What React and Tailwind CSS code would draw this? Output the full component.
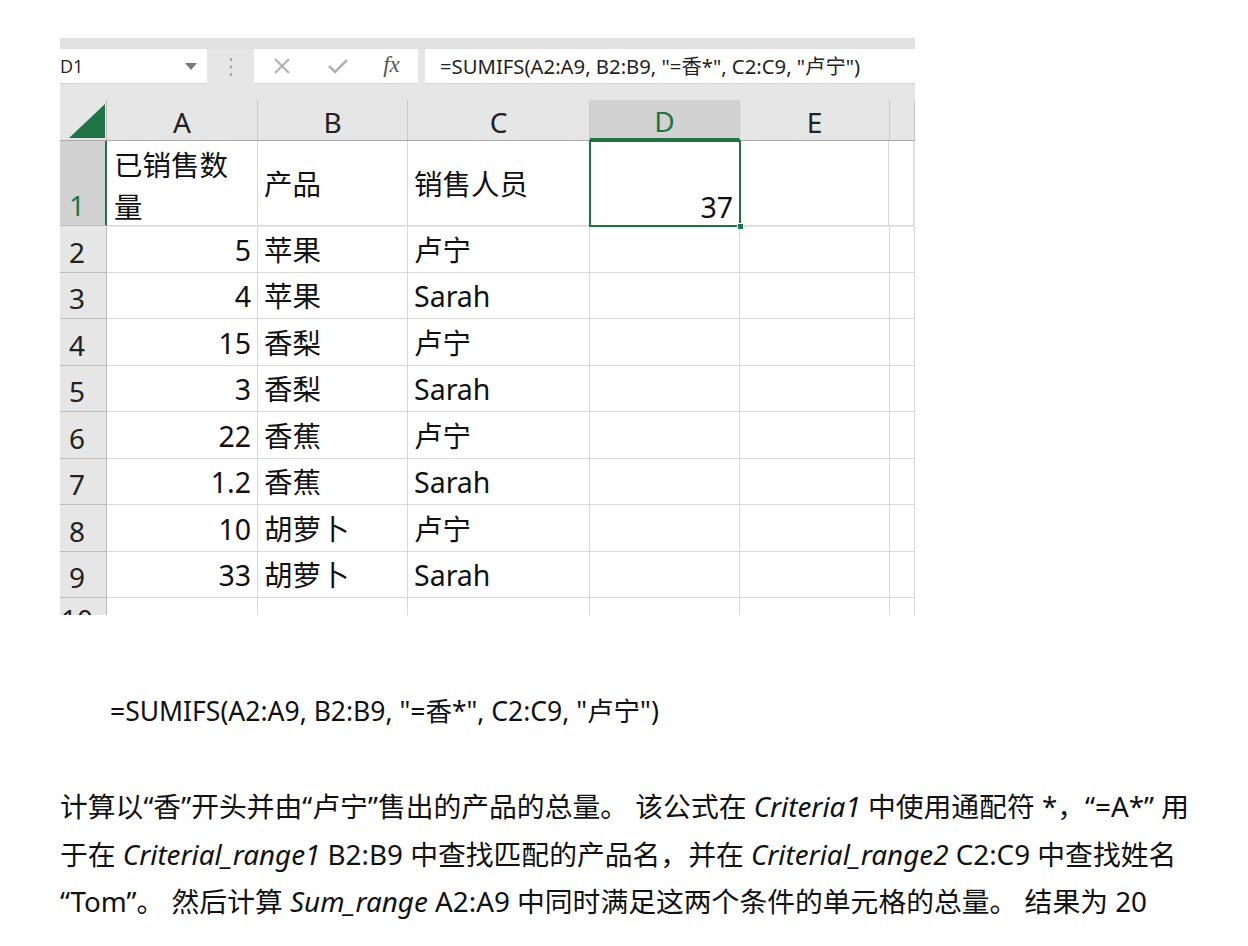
import React from "react";

const GREEN = "#217346";
const colW = [151, 150, 182, 150, 150, 25];
const rowsData = [
  ["5", "苹果", "卢宁"],
  ["4", "苹果", "Sarah"],
  ["15", "香梨", "卢宁"],
  ["3", "香梨", "Sarah"],
  ["22", "香蕉", "卢宁"],
  ["1.2", "香蕉", "Sarah"],
  ["10", "胡萝卜", "卢宁"],
  ["33", "胡萝卜", "Sarah"],
];
const rowH = [46, 46, 47, 46, 47, 46, 47, 46];
const colLetters = ["A", "B", "C", "D", "E", ""];

const font = { fontFamily: '"Noto Sans", "Noto Sans CJK SC", sans-serif' };

function RowHeader({ n, h, selected }) {
  return (
    <div
      className={`w-[47px] shrink-0 flex items-end border-b border-r ${
        selected ? "bg-[#d2d2d2] border-r-[#217346] border-r-2 border-b-[#bdbdbd]" : "bg-[#e6e6e6] border-[#bdbdbd]"
      }`}
      style={{ height: h }}
    >
      <div
        className={`w-[34px] text-center text-[28px] leading-[34px] pb-[3px] ${selected ? "text-[#217346]" : "text-[#222]"}`}
      >
        {n}
      </div>
    </div>
  );
}

function Cell({ w, h, children, align = "left", className = "" }) {
  return (
    <div
      className={`shrink-0 flex items-end border-b border-r border-[#d9d9d9] bg-white px-[6px] pb-[4px] text-[28.5px] leading-[36px] text-[#111] ${
        align === "right" ? "justify-end" : "justify-start"
      } ${className}`}
      style={{ width: w, height: h }}
    >
      {children}
    </div>
  );
}

function Excel() {
  return (
    <div className="w-[855px] h-[577px] overflow-hidden bg-[#e6e6e6] relative" style={font}>
      {/* top band */}
      <div className="h-[11px] bg-[#e1e1e1]" />
      {/* formula bar */}
      <div className="h-[35px] flex items-stretch">
        <div className="w-[147px] bg-white border-b border-[#d4d4d4] flex items-center justify-between pr-[10px]">
          <span className="text-[18px] text-[#222] leading-none" style={{ fontFamily: '"Open Sans", sans-serif' }}>D1</span>
          <svg width="12" height="7" viewBox="0 0 12 7">
            <path d="M0 0 L12 0 L6 7 Z" fill="#7a7a7a" />
          </svg>
        </div>
        <div className="w-[47px] flex items-center justify-center">
          <svg width="4" height="20" viewBox="0 0 4 20">
            <rect x="1" y="1" width="2" height="3" fill="#a8a8a8" />
            <rect x="1" y="8.5" width="2" height="3" fill="#a8a8a8" />
            <rect x="1" y="16" width="2" height="3" fill="#a8a8a8" />
          </svg>
        </div>
        <div className="w-[164px] bg-white border-b border-[#d4d4d4] flex items-center">
          <div className="w-[56px] flex justify-center">
            <svg width="18" height="18" viewBox="0 0 18 18">
              <path d="M2 2 L16 16 M16 2 L2 16" stroke="#b3b3b3" strokeWidth="2.2" />
            </svg>
          </div>
          <div className="w-[55px] flex justify-center">
            <svg width="22" height="18" viewBox="0 0 22 18">
              <path d="M2 9 L8 15 L20 3" stroke="#b3b3b3" strokeWidth="2.6" fill="none" />
            </svg>
          </div>
          <div className="w-[53px] flex justify-center">
            <span
              className="text-[23px] italic text-[#555] leading-none -mt-[3px]"
              style={{ fontFamily: '"Liberation Serif", serif' }}
            >
              fx
            </span>
          </div>
        </div>
        <div className="w-[7px]" />
        <div className="flex-1 bg-white border-b border-[#d4d4d4] flex items-center pl-[15px]">
          <span className="text-[20.3px] text-[#222] leading-none whitespace-nowrap" style={font}>
            =SUMIFS(A2:A9, B2:B9, "=香*", C2:C9, "卢宁")
          </span>
        </div>
      </div>
      <div className="h-[16px]" />
      {/* column headers */}
      <div className="flex h-[41px] border-b border-[#ababab]">
        <div className="w-[47px] shrink-0 border-r border-[#bdbdbd] bg-[#e6e6e6] relative">
          <svg className="absolute left-[8px] top-[3px]" width="38" height="36" viewBox="0 0 38 36">
            <path d="M37 1 L37 35 L1 35 Z" fill={GREEN} />
          </svg>
        </div>
        {colLetters.map((l, i) => (
          <div
            key={i}
            className={`shrink-0 flex items-center justify-center text-[28px] border-r border-[#c8c8c8] ${
              l === "D" ? "bg-[#d2d2d2] text-[#217346] border-b-2 border-b-[#217346]" : "text-[#222]"
            }`}
            style={{ width: colW[i] }}
          >
            <span className="mt-[4px]">{l}</span>
          </div>
        ))}
      </div>
      {/* row 1 */}
      <div className="flex">
        <RowHeader n="1" h={85} selected />
        <div
          className="shrink-0 border-b border-r border-[#d9d9d9] bg-white px-[7px] pt-[3px] text-[28.5px] leading-[42px] text-[#111]"
          style={{ width: colW[0], height: 85 }}
        >
          已销售数量
        </div>
        <div
          className="shrink-0 flex items-center border-b border-r border-[#d9d9d9] bg-white px-[6px] pt-[2px] text-[28.5px] text-[#111]"
          style={{ width: colW[1], height: 85 }}
        >
          产品
        </div>
        <div
          className="shrink-0 flex items-center border-b border-r border-[#d9d9d9] bg-white px-[6px] pt-[2px] text-[28.5px] text-[#111]"
          style={{ width: colW[2], height: 85 }}
        >
          销售人员
        </div>
        <div
          className="shrink-0 relative flex items-end justify-end bg-white px-[6px] text-[28.5px] leading-[36px] text-[#111] border-2 border-[#217346] -ml-[1px] -mt-[1px] -mr-[1px]"
          style={{ width: colW[3] + 2, height: 87 }}
        >
          37
          <div className="absolute -right-[5px] -bottom-[5px] w-[7px] h-[7px] bg-[#217346] border border-white" />
        </div>
        <Cell w={colW[4] - 1} h={85} />
        <Cell w={colW[5]} h={85} />
      </div>
      {rowsData.map((r, idx) => (
        <div className="flex" key={idx}>
          <RowHeader n={String(idx + 2)} h={rowH[idx]} />
          <Cell w={colW[0]} h={rowH[idx]} align="right">{r[0]}</Cell>
          <Cell w={colW[1]} h={rowH[idx]}>{r[1]}</Cell>
          <Cell w={colW[2]} h={rowH[idx]}>{r[2]}</Cell>
          <Cell w={colW[3]} h={rowH[idx]} />
          <Cell w={colW[4]} h={rowH[idx]} />
          <Cell w={colW[5]} h={rowH[idx]} />
        </div>
      ))}
      <div className="flex">
        <div className="w-[47px] shrink-0 h-[46px] bg-[#e6e6e6] border-r border-[#bdbdbd] flex items-start">
          <div className="w-[34px] text-center text-[28px] leading-[34px] pt-[4px] text-[#222]">10</div>
        </div>
        {colW.map((w, i) => (
          <div key={i} className="shrink-0 h-[46px] bg-white border-r border-[#d9d9d9]" style={{ width: w }} />
        ))}
      </div>
    </div>
  );
}

export default function App() {
  const it = "italic";
  return (
    <div className="w-[1248px] h-[946px] bg-white overflow-hidden text-[#111]" style={font}>
      <div className="pt-[38px] pl-[60px]">
        <Excel />
      </div>
      <div className="pl-[110px] mt-[80px] text-[26.5px] leading-[32px] whitespace-nowrap">
        =SUMIFS(A2:A9, B2:B9, "=香*", C2:C9, "卢宁")
      </div>
      <div className="pl-[60px] mt-[56px] text-[27.8px] leading-[47.5px] whitespace-nowrap">
        <div>
          计算以“香”开头并由“卢宁”售出的产品的总量。 该公式在 <span className={it}>Criteria1</span> 中使用通配符 *，“=A*” 用
        </div>
        <div>
          于在 <span className={it}>Criterial_range1</span> B2:B9 中查找匹配的产品名，并在 <span className={it}>Criterial_range2</span> C2:C9 中查找姓名
        </div>
        <div>
          “Tom”。 然后计算 <span className={it}>Sum_range</span> A2:A9 中同时满足这两个条件的单元格的总量。 结果为 20
        </div>
      </div>
    </div>
  );
}
